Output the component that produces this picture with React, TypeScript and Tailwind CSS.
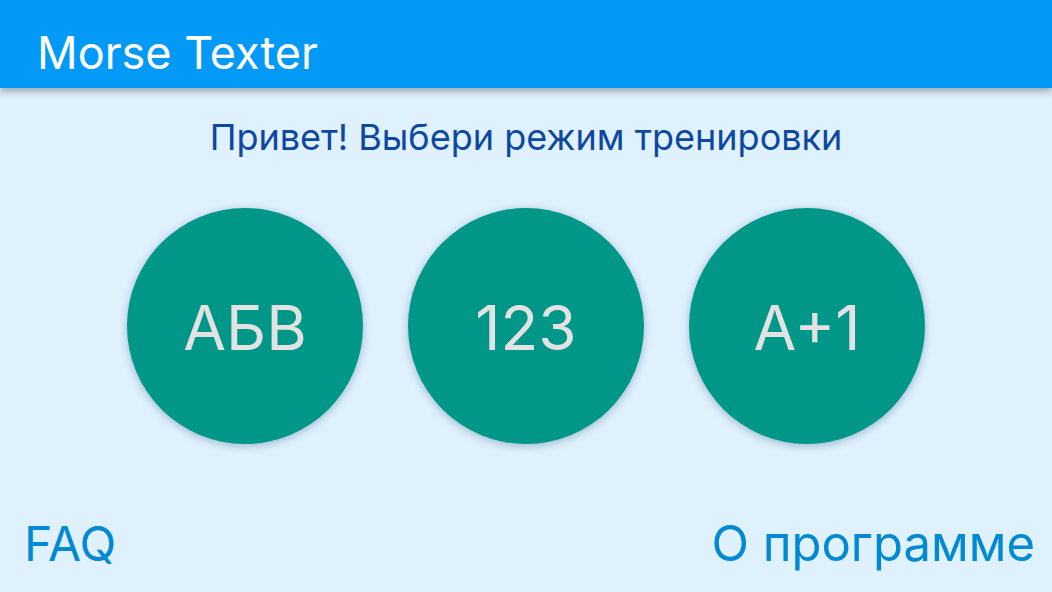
export default function App() {
  const modes = ['АБВ', '123', 'А+1'];
  return (
    <div
      className="w-[1052px] h-[592px] bg-[#dff1fd] flex flex-col overflow-hidden"
      style={{ fontFamily: 'Inter, Roboto, "Noto Sans", sans-serif' }}
    >
      <header className="h-[88px] bg-[#0299f7] shadow-[0_3px_8px_rgba(0,0,0,0.35)] flex items-center pl-[37px] pt-[16px] shrink-0 relative z-10">
        <h1 className="text-white text-[45px] leading-none">Morse Texter</h1>
      </header>

      <p className="text-center text-[#0d47a1] text-[36px] leading-none mt-[31px]">
        Привет! Выбери режим тренировки
      </p>

      <div className="flex justify-center gap-[45px] mt-[53px]">
        {modes.map((m) => (
          <button
            key={m}
            className="w-[236px] h-[236px] rounded-full bg-[#009688] text-[#e2e2e2] text-[62px] leading-none flex items-center justify-center pt-[4px] shadow-[0_2px_8px_rgba(0,60,90,0.3)]"
          >
            {m}
          </button>
        ))}
      </div>

      <div className="flex justify-between items-end mt-auto pl-[24px] pr-[17px] pb-[24px]">
        <span className="text-[#0289d3] text-[48px] leading-none">FAQ</span>
        <span className="text-[#0289d3] text-[49px] leading-none">О программе</span>
      </div>
    </div>
  );
}
